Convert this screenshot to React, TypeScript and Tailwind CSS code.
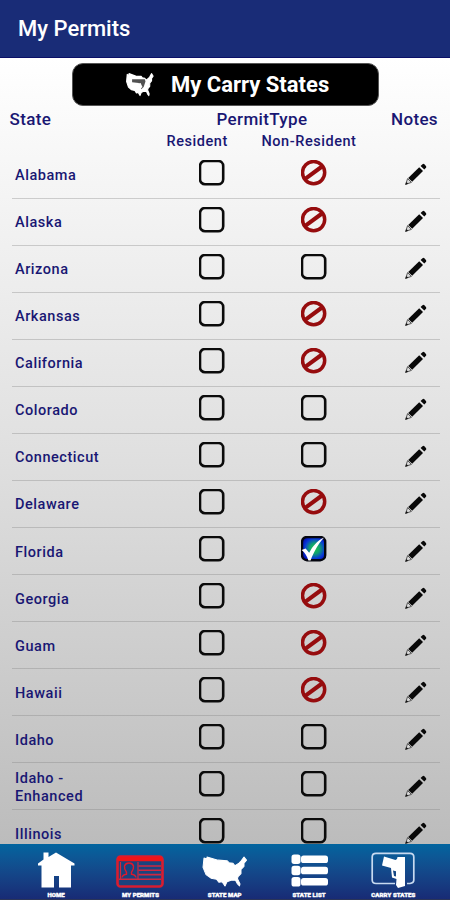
import React from "react";

type Permit = "empty" | "blocked" | "checked";

const STATES: { name: string; nonResident: Permit }[] = [
  { name: "Alabama", nonResident: "blocked" },
  { name: "Alaska", nonResident: "blocked" },
  { name: "Arizona", nonResident: "empty" },
  { name: "Arkansas", nonResident: "blocked" },
  { name: "California", nonResident: "blocked" },
  { name: "Colorado", nonResident: "empty" },
  { name: "Connecticut", nonResident: "empty" },
  { name: "Delaware", nonResident: "blocked" },
  { name: "Florida", nonResident: "checked" },
  { name: "Georgia", nonResident: "blocked" },
  { name: "Guam", nonResident: "blocked" },
  { name: "Hawaii", nonResident: "blocked" },
  { name: "Idaho", nonResident: "empty" },
  { name: "Idaho - Enhanced", nonResident: "empty" },
  { name: "Illinois", nonResident: "empty" },
];

const USA =
  "M2 2 L5 3 L5 1 L16 4 L25 4.5 L27 6.5 L31 7 L33 9.5 L37 7 L39 5 L42 1 L44.5 4 L42 7 L42 10 L39 13 L39 17 L36 20 L35.5 22 L38 27 L37.5 29 L35.5 27 L33.5 23.5 L29 23.5 L25 25 L23 29 L20 25 L17 25.5 L14.5 22.5 L9 21.5 L4 18 L1 11 Z";

function Mark({ kind }: { kind: Permit }) {
  if (kind === "blocked") {
    return (
      <svg className="block size-[26px]" viewBox="0 0 26 26" fill="none" stroke="#960c0e" strokeWidth="3.5">
        <circle cx="12.6" cy="12.6" r="11.1" />
        <path d="M4.2 18.8 L21 6.5" strokeWidth="4.1" />
      </svg>
    );
  }
  if (kind === "checked") {
    return (
      <svg className="block size-[26px]" viewBox="0.4 0.4 26 26">
        <defs>
          <radialGradient id="glow" cx="0.55" cy="0.5" r="0.62">
            <stop offset="0" stopColor="#18c848" />
            <stop offset="0.35" stopColor="#10a070" />
            <stop offset="0.7" stopColor="#0838d8" />
            <stop offset="1" stopColor="#040ab0" />
          </radialGradient>
        </defs>
        <rect x="1.4" y="1.4" width="23.2" height="23.2" rx="5" fill="url(#glow)" stroke="#05060f" strokeWidth="2.4" />
        <path d="M1 14.5 L5 13 L8.6 17.2 C12 10.5 16.5 5 23.5 1.8 C17.5 8.5 13.5 15.5 10 24.8 L7.8 24.8 C6.3 20.5 4.3 17 1 14.5Z" fill="#fff" />
      </svg>
    );
  }
  return (
    <svg className="block size-[26px]" viewBox="0.4 0.4 26 26">
      <rect x="1.4" y="1.4" width="23.2" height="23.2" rx="5" fill="none" stroke="#0b0b0b" strokeWidth="2.6" />
    </svg>
  );
}

function Pencil() {
  return (
    <svg className="block size-[22px]" viewBox="0 0 22 22">
      <path d="M14.2 4.2 L18 8 L7.2 18.8 L3.2 15Z" fill="#080808" />
      <path d="M15.6 3 L17.5 1.2 Q18.5 .3 19.4 1.3 L20.9 2.9 Q21.8 3.8 21 4.7 L19.3 6.6Z" fill="#080808" />
      <path d="M2.6 15.6 L6.4 19.4 L.6 21.400Z" fill="#d8d8d8" stroke="#333" strokeWidth=".8" />
      <path d="M1.400 18.900 L3.200 20.700 L.3 21.700Z" fill="#111" />
    </svg>
  );
}

function HomeIcon() {
  return (
    <svg className="block h-[36px] w-[38px]" viewBox="0 0 38 36" fill="#fff">
      <path d="M6.5 .5h5v4.5l7.5-4.5L37.5 11.5v2H34v22H22V24h-5v11.500H4.500V13.500H1v-2l5.500-4Z" />
    </svg>
  );
}

function PermitIcon() {
  return (
    <svg className="block h-[33px] w-[48px]" viewBox="0 0 48 33" fill="none">
      <rect x="1.500" y="1.500" width="45" height="30" rx="3" fill="#1b437e" stroke="#d81d30" strokeWidth="2.600" />
      <path d="M2 4H46" stroke="#f01418" strokeWidth="4.500" />
      <path d="M22.500 11H45M22.500 15.300H45M22.500 19.600H45M3 24.300H45" stroke="#cf2840" strokeWidth="1.600" />
      <path d="M22 7V24M4.500 7V24" stroke="#cf2840" strokeWidth="1.200" />
      <path d="M6 22.500 Q6.500 19.700 10.500 19.200 V17.200 Q8 14 8.500 11 Q9.500 8 13 8 Q16.500 8 17.500 11 Q18 14 15.500 17.200 V19.200 Q19.500 19.700 20 22.500" stroke="#e3172a" strokeWidth="1.400" />
    </svg>
  );
}

function ListIcon() {
  return (
    <svg className="block h-[33px] w-[37px]" viewBox="0 0 37 33" fill="#fff">
      {[0.5, 11.8, 23.1].map((y) => (
        <g key={y}>
          <rect x=".5" y={y} width="9" height="9.4" rx="2.6" />
          <rect x="10" y={y + 0.9} width="27" height="7.6" rx="2.6" />
        </g>
      ))}
    </svg>
  );
}

function CarryIcon() {
  return (
    <svg className="block h-[36px] w-[44px]" viewBox="0 0 44 36">
      <path d="M24 31.500H5Q1.200 31.500 1.200 28V5Q1.200 1.300 5 1.300H39Q42.800 1.300 42.800 5V28Q42.800 31 39 31.500H36" fill="none" stroke="#c8daf0" strokeWidth="1.700" />
      <path d="M13 4.500 L24.500 8 L26 7 L26.500 5 H34 V34 L27 36 L25 33 L25.500 27 L21 25.500 L20 16 L11 13.500Z" fill="#fff" />
      <path d="M22 18.500 L25 19.300 V24.500 L23 24Z" fill="#164784" />
    </svg>
  );
}

function Tab({ label, top, children }: { label: string; top: string; children: React.ReactNode }) {
  return (
    <div className="flex w-[84.3px] flex-col items-center">
      <div className={`flex h-[47px] items-start ${top}`}>{children}</div>
      <span className="whitespace-nowrap text-[6px] font-black leading-[7px] tracking-[0.1px] text-white [-webkit-text-stroke:0.4px_white]">{label}</span>
    </div>
  );
}

export default function App() {
  return (
    <div className="flex h-[900px] w-[450px] flex-col overflow-hidden font-[Roboto,'Liberation_Sans',sans-serif]">
      <header className="flex h-[58px] shrink-0 items-center border-b border-[#0b1068] bg-[#192c77] pl-[18px]">
        <h1 className="text-[22px] font-medium text-white">My Permits</h1>
      </header>

      <main className="flex min-h-0 flex-1 flex-col overflow-hidden bg-linear-to-b from-white via-[#e0e0e0] to-[#bcbcbc] text-[#191773]">
        <button className="mt-[5px] ml-[72px] flex h-[43px] w-[307px] shrink-0 items-center rounded-[11px] border border-[#555] bg-black pl-[53px] text-[22px] font-bold text-white">
          <svg className="mr-[17px] h-[24px] w-[28px]" viewBox="0 0 46 31" preserveAspectRatio="none">
            <path d={USA} fill="#fff" stroke="#fff" strokeWidth="1.8" strokeLinejoin="round" />
            <path d="M10 8H31L32 11L29 18L25 21L24 17H21V13L10 12Z" fill="#171717" opacity=".75" />
            <path d="M17 14L24 13L27 18L23 21L18 18Z" fill="#fff" />
          </svg>
          My Carry States
        </button>

        <div className="flex h-[26px] shrink-0 items-center pt-px text-[17px] font-medium tracking-[0.35px]">
          <span className="w-[207px] pl-[9.5px]">State</span>
          <span className="w-[174px] pl-[9.5px]">PermitType</span>
          <span className="pl-[10px]">Notes</span>
        </div>
        <div className="flex h-[19.5px] shrink-0 items-center pt-px text-[14.5px] font-medium tracking-[0.55px]">
          <span className="ml-[166.5px] w-[95px]">Resident</span>
          <span>Non-Resident</span>
        </div>

        <ul className="mr-[10px] ml-[12px]">
          {STATES.map((s) => (
            <li key={s.name} className="flex h-[47.07px] border-b border-[#808080]/35">
              <div className="flex w-[186.5px] items-center pt-[3px] pl-[3px]">
                <span className="w-[90px] text-[14.5px] font-medium leading-[18px] tracking-[0.55px]">{s.name}</span>
              </div>
              <div className="w-[102px] pt-[8px]">
                <Mark kind="empty" />
              </div>
              <div className="w-[104.5px] pt-[8px]">
                <Mark kind={s.nonResident} />
              </div>
              <div className="pt-[11.5px]">
                <Pencil />
              </div>
            </li>
          ))}
        </ul>
      </main>

      <nav className="flex h-[56px] shrink-0 border-b border-[#2b3558] bg-linear-to-b from-[#02659f] to-[#182b75] pl-[14px]">
        <Tab label="HOME" top="pt-[8px]"><HomeIcon /></Tab>
        <Tab label="MY PERMITS" top="pt-[11px]"><PermitIcon /></Tab>
        <Tab label="STATE MAP" top="pt-[12px]">
          <svg className="block h-[32px] w-[46px]" viewBox="0 0 46 31" preserveAspectRatio="none">
            <path d={USA} fill="#fff" stroke="#fff" strokeWidth="1" strokeLinejoin="round" />
          </svg>
        </Tab>
        <Tab label="STATE LIST" top="pt-[10px]"><ListIcon /></Tab>
        <Tab label="CARRY STATES" top="pt-[8px]"><CarryIcon /></Tab>
      </nav>
    </div>
  );
}
